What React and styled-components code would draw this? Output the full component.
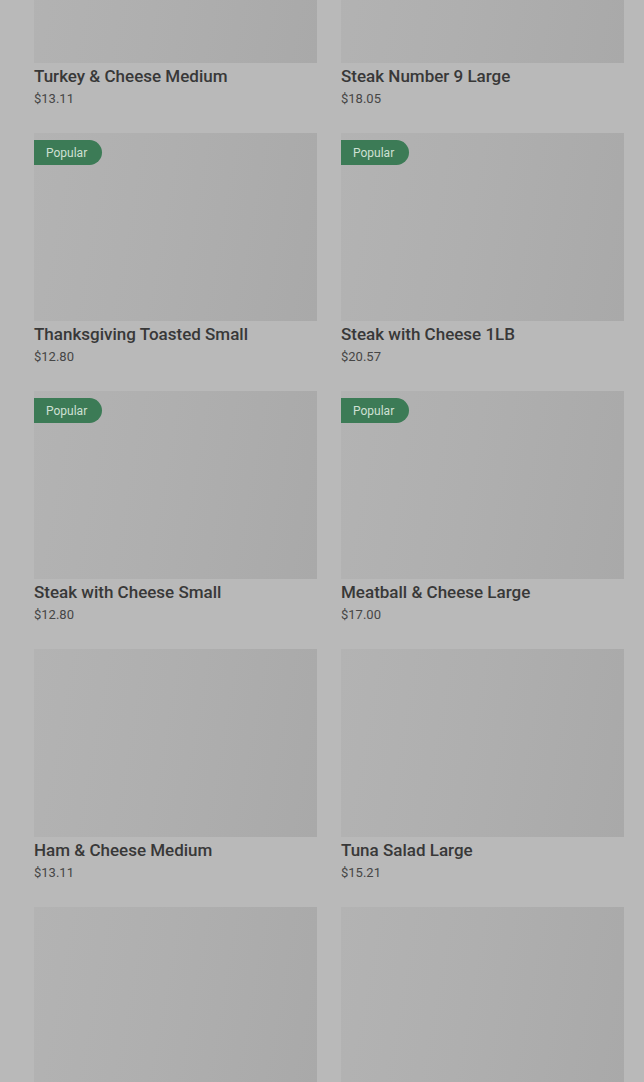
import React from "react";
import styled, { createGlobalStyle } from "styled-components";

const GlobalStyle = createGlobalStyle`
  html, body {
    margin: 0;
    padding: 0;
    background: #b9b9b9;
    overflow: hidden;
  }
  body {
    font-family: Roboto, "Liberation Sans", sans-serif;
  }
`;

const Grid = styled.div`
  display: grid;
  grid-template-columns: 1fr 1fr;
  column-gap: 24px;
  row-gap: 25px;
  padding: 0 20px 0 34px;
  margin-top: -125px;
`;

const Card = styled.div`
  display: flex;
  flex-direction: column;
`;

const Photo = styled.div`
  position: relative;
  height: 188px;
  background: linear-gradient(100deg, #b3b3b3 0%, #afafaf 45%, #a9a9a9 100%);
`;

const Badge = styled.span`
  position: absolute;
  top: 7px;
  left: 0;
  height: 25px;
  padding: 0 15px 0 12px;
  display: flex;
  align-items: center;
  background: #3c7b56;
  color: #cfe0d4;
  font-size: 12px;
  border-radius: 0 13px 13px 0;
`;

const Title = styled.div`
  margin-top: 3px;
  font-size: 17px;
  line-height: 20px;
  font-weight: 500;
  color: #383838;
`;

const Price = styled.div`
  margin-top: 4px;
  font-size: 13px;
  line-height: 18px;
  color: #464646;
`;

const items = [
  { name: "Turkey & Cheese Medium", price: "$13.11" },
  { name: "Steak Number 9 Large", price: "$18.05" },
  { name: "Thanksgiving Toasted Small", price: "$12.80", popular: true },
  { name: "Steak with Cheese 1LB", price: "$20.57", popular: true },
  { name: "Steak with Cheese Small", price: "$12.80", popular: true },
  { name: "Meatball & Cheese Large", price: "$17.00", popular: true },
  { name: "Ham & Cheese Medium", price: "$13.11" },
  { name: "Tuna Salad Large", price: "$15.21" },
  { name: "Italian B.M.T. Medium", price: "$13.11" },
  { name: "Veggie Delite Large", price: "$14.20" },
];

export default function App() {
  return (
    <>
      <GlobalStyle />
      <Grid>
        {items.map((item, i) => (
          <Card key={i}>
            <Photo>{item.popular && <Badge>Popular</Badge>}</Photo>
            <Title>{item.name}</Title>
            <Price>{item.price}</Price>
          </Card>
        ))}
      </Grid>
    </>
  );
}
